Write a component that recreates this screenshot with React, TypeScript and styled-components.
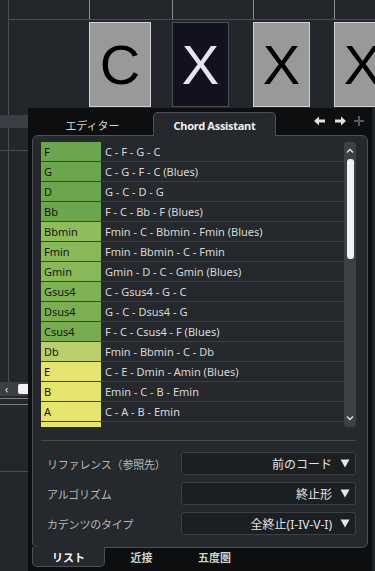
import styled, { createGlobalStyle } from 'styled-components'

const GlobalStyle = createGlobalStyle`
  html, body {
    margin: 0;
    padding: 0;
    background: #23272b;
  }
  body {
    font-family: 'Noto Sans', 'Noto Sans CJK JP', sans-serif;
  }
`

interface Chord {
    name: string
    color: string
    prog: string
}

const chords: Chord[] = [
    { name: 'F', color: '#6ba64f', prog: 'C - F - G - C' },
    { name: 'G', color: '#6ba64f', prog: 'C - G - F - C (Blues)' },
    { name: 'D', color: '#6ba64f', prog: 'G - C - D - G' },
    { name: 'Bb', color: '#6ba64f', prog: 'F - C - Bb - F (Blues)' },
    { name: 'Bbmin', color: '#8fbd5c', prog: 'Fmin - C - Bbmin - Fmin (Blues)' },
    { name: 'Fmin', color: '#89b858', prog: 'Fmin - Bbmin - C - Fmin' },
    { name: 'Gmin', color: '#89b858', prog: 'Gmin - D - C - Gmin (Blues)' },
    { name: 'Gsus4', color: '#7fb254', prog: 'C - Gsus4 - G - C' },
    { name: 'Dsus4', color: '#7caf52', prog: 'G - C - Dsus4 - G' },
    { name: 'Csus4', color: '#78ac50', prog: 'F - C - Csus4 - F (Blues)' },
    { name: 'Db', color: '#bacf69', prog: 'Fmin - Bbmin - C - Db' },
    { name: 'E', color: '#e5e46f', prog: 'C - E - Dmin - Amin (Blues)' },
    { name: 'B', color: '#e5e46f', prog: 'Emin - C - B - Emin' },
    { name: 'A', color: '#e5e46f', prog: 'C - A - B - Emin' },
    { name: '', color: '#e5e46f', prog: '' },
]

const settings = [
    { label: 'リファレンス（参照先）', value: '前のコード' },
    { label: 'アルゴリズム', value: '終止形' },
    { label: 'カデンツのタイプ', value: '全終止(I-IV-V-I)' },
]

const Root = styled.div`
  width: 375px;
  height: 571px;
  overflow: hidden;
  display: flex;
  flex-direction: column;
  background: #23272b;
`

/* ---------- track area on top ---------- */

const Track = styled.div`
  height: 108px;
  flex-shrink: 0;
  display: flex;
`

const Gutter = styled.div`
  width: 89px;
  flex-shrink: 0;
  display: flex;
  flex-direction: column;
`

const GutterRuler = styled.div`
  height: 19px;
  border-bottom: 1px solid #4a4e53;
  margin-left: 8px;
  border-left: 1px solid #4a4e53;
`

const GutterLine = styled.div`
  flex: 1;
  margin-left: 8px;
  border-left: 1px solid #4a4e53;
`

const Cell = styled.div<{ $w: number }>`
  width: ${({ $w }) => $w}px;
  flex-shrink: 0;
  display: flex;
  flex-direction: column;
`

const Ruler = styled.div`
  height: 19px;
  border-left: 1px solid #8a8d91;
  border-bottom: 1px solid #4a4e53;
  margin-bottom: 2px;
`

const ChordBox = styled.div<{ $w: number; $dark?: boolean }>`
  width: ${({ $w }) => $w}px;
  height: 85px;
  box-sizing: border-box;
  display: flex;
  align-items: center;
  justify-content: center;
  background: ${({ $dark }) => ($dark ? '#12121f' : '#999999')};
  border: 1px solid ${({ $dark }) => ($dark ? '#4c4c58' : '#d2d2d2')};
  color: ${({ $dark }) => ($dark ? '#e4e4f4' : '#000')};
  font-family: 'Liberation Sans', Arial, sans-serif;
  font-size: 56px;
  line-height: 1;
`

/* ---------- lower area ---------- */

const Lower = styled.div`
  flex: 1;
  display: flex;
  min-height: 0;
`

const LeftStrip = styled.div`
  width: 28px;
  flex-shrink: 0;
  display: flex;
  flex-direction: column;
`

const StripUpper = styled.div`
  height: 288px;
  display: flex;
  flex-direction: column;
  background: linear-gradient(#4a4e53, #4a4e53) 8px 0 / 1px 100% no-repeat;
`

const Band = styled.div`
  height: 13px;
  margin-top: 7px;
  background: #3a3f46;
`

const HLine = styled.div<{ $mt: number; $c?: string }>`
  height: 1px;
  margin-top: ${({ $mt }) => $mt}px;
  background: ${({ $c }) => $c || '#4a4e53'};
`

const HScroll = styled.div`
  height: 14px;
  display: flex;
  align-items: center;
  background: #3b3f44;
  color: #e8e8e8;
  font-size: 10px;
`

const HScrollThumb = styled.div`
  width: 10px;
  height: 10px;
  margin-left: auto;
  background: #f2f2f2;
  border-radius: 2px 0 0 2px;
`

const RightStrip = styled.div`
  width: 3px;
  flex-shrink: 0;
  background: #1f2225;
`

/* ---------- chord assistant panel ---------- */

const Panel = styled.div`
  width: 344px;
  flex-shrink: 0;
  display: flex;
  flex-direction: column;
  background: #0d0e0f;
`

const TabBar = styled.div`
  height: 27px;
  display: flex;
  align-items: flex-end;
  padding-left: 4px;
  position: relative;
  z-index: 1;
`

const Tab = styled.div<{ $active?: boolean; $w: number }>`
  width: ${({ $w }) => $w}px;
  box-sizing: border-box;
  height: ${({ $active }) => ($active ? '24px' : '23px')};
  margin-bottom: ${({ $active }) => ($active ? '-1px' : '0')};
  display: flex;
  align-items: center;
  justify-content: center;
  font-size: 11px;
  font-weight: ${({ $active }) => ($active ? 700 : 400)};
  letter-spacing: ${({ $active }) => ($active ? '-0.3px' : '0')};
  color: ${({ $active }) => ($active ? '#f0f0f0' : '#d8d8d8')};
  background: ${({ $active }) => ($active ? '#25282c' : 'transparent')};
  border: ${({ $active }) => ($active ? '1px solid #4c4f54' : '1px solid transparent')};
  border-bottom: none;
  border-radius: 5px 5px 0 0;
  padding-top: 2px;
`

const TabTools = styled.div`
  margin-left: auto;
  height: 27px;
  display: flex;
  align-items: center;
  gap: 8px;
  padding-right: 8px;
  padding-bottom: 2px;
  box-sizing: border-box;
`

const Inner = styled.div`
  margin: 0 4px;
  height: 413px;
  box-sizing: border-box;
  border: 1px solid #4c4f54;
  border-radius: 6px;
  background: #25282c;
  padding: 6px 11px 11px 8px;
  display: flex;
  flex-direction: column;
`

const ListArea = styled.div`
  height: 285px;
  display: flex;
`

const List = styled.div`
  flex: 1;
  overflow: hidden;
`

const Row = styled.div`
  height: 20px;
  box-sizing: border-box;
  display: flex;
  border-bottom: 1px solid #3d4045;
  font-size: 11px;
`

const NameCell = styled.div<{ $bg: string }>`
  width: 60px;
  flex-shrink: 0;
  padding-left: 3px;
  box-sizing: border-box;
  display: flex;
  align-items: center;
  background: ${({ $bg }) => $bg};
  color: #161616;
`

const ProgCell = styled.div`
  flex: 1;
  padding-left: 4px;
  display: flex;
  align-items: center;
  color: #d8d8d8;
  white-space: nowrap;
`

const VScroll = styled.div`
  width: 12px;
  flex-shrink: 0;
  background: #3d4146;
  border-radius: 3px;
  display: flex;
  flex-direction: column;
  align-items: center;
`

const VArrow = styled.div`
  height: 17px;
  display: flex;
  align-items: center;
  justify-content: center;
`

const VThumb = styled.div`
  width: 7px;
  height: 100px;
  margin-left: 1px;
  background: #f2f2f2;
  border-radius: 3px;
`

const VSpacer = styled.div`
  flex: 1;
`

const Separator = styled.div`
  height: 1px;
  margin-top: 13px;
  background: #45484d;
`

const Settings = styled.div`
  margin-top: 11px;
  display: flex;
  flex-direction: column;
  gap: 7px;
`

const SettingRow = styled.div`
  height: 23px;
  display: flex;
  align-items: center;
`

const Label = styled.div`
  width: 140px;
  min-width: 0;
  flex-shrink: 0;
  box-sizing: border-box;
  padding-left: 6px;
  font-size: 11px;
  color: #b9b9b9;
  white-space: nowrap;
  letter-spacing: -0.2px;
`

const Dropdown = styled.div`
  flex: 1;
  height: 23px;
  box-sizing: border-box;
  display: flex;
  align-items: center;
  justify-content: flex-end;
  gap: 8px;
  padding-right: 5px;
  background: #1c1f22;
  border: 1px solid #3c3f44;
  border-radius: 3px;
  font-size: 12px;
  color: #e2e2e2;
`

const BottomBar = styled.div`
  height: 23px;
  display: flex;
  align-items: flex-start;
  padding-left: 4px;
  position: relative;
  z-index: 1;
`

const BottomTab = styled.div<{ $active?: boolean }>`
  width: 73px;
  box-sizing: border-box;
  height: 20px;
  margin-top: -1px;
  display: flex;
  align-items: center;
  justify-content: center;
  font-size: 11px;
  font-weight: 700;
  color: ${({ $active }) => ($active ? '#f4f4f4' : '#d0d0d0')};
  background: ${({ $active }) => ($active ? '#25282c' : 'transparent')};
  border: 1px solid ${({ $active }) => ($active ? '#4c4f54' : 'transparent')};
  border-top: none;
  border-radius: 0 0 5px 5px;
`

const Tri = () => (
    <svg width="10" height="9" viewBox="0 0 10 9">
        <path d="M0.5 0.5 H9.5 L5 8.5 Z" fill="#e6e6e6" />
    </svg>
)

const ArrowLeft = () => (
    <svg width="12" height="10" viewBox="0 0 12 10">
        <path d="M0 5 L5 0.5 V3.5 H11 V6.5 H5 V9.5 Z" fill="#e0e0e0" />
    </svg>
)

const ArrowRight = () => (
    <svg width="12" height="10" viewBox="0 0 12 10">
        <path d="M12 5 L7 0.5 V3.5 H1 V6.5 H7 V9.5 Z" fill="#e0e0e0" />
    </svg>
)

const Plus = () => (
    <svg width="10" height="10" viewBox="0 0 10 10">
        <path d="M4 0 H6 V4 H10 V6 H6 V10 H4 V6 H0 V4 H4 Z" fill="#55585c" />
    </svg>
)

const ChevUp = () => (
    <svg width="8" height="5" viewBox="0 0 8 5">
        <path d="M1 4.5 L4 1.5 L7 4.5" stroke="#e6e6e6" strokeWidth="1.3" fill="none" />
    </svg>
)

const ChevDown = () => (
    <svg width="8" height="5" viewBox="0 0 8 5">
        <path d="M1 0.5 L4 3.5 L7 0.5" stroke="#e6e6e6" strokeWidth="1.3" fill="none" />
    </svg>
)

export default function App() {
    return (
        <Root>
            <GlobalStyle />
            <Track>
                <Gutter>
                    <GutterRuler />
                    <GutterLine />
                </Gutter>
                <Cell $w={83}>
                    <Ruler />
                    <ChordBox $w={62}>C</ChordBox>
                </Cell>
                <Cell $w={81}>
                    <Ruler />
                    <ChordBox $w={57} $dark>X</ChordBox>
                </Cell>
                <Cell $w={81}>
                    <Ruler />
                    <ChordBox $w={57}>X</ChordBox>
                </Cell>
                <Cell $w={60}>
                    <Ruler />
                    <ChordBox $w={57}>X</ChordBox>
                </Cell>
            </Track>

            <Lower>
                <LeftStrip>
                    <StripUpper>
                        <Band />
                        <HLine $mt={22} />
                        <VSpacer />
                        <HScroll>
                            <span style={{ marginLeft: 5 }}>&lsaquo;</span>
                            <HScrollThumb />
                        </HScroll>
                    </StripUpper>
                    <HLine $mt={2} $c="#7d8084" />
                    <HLine $mt={5} $c="#7d8084" />
                    <HLine $mt={66} />
                </LeftStrip>

                <Panel>
                    <TabBar>
                        <Tab $w={121}>エディター</Tab>
                        <Tab $w={123} $active>Chord Assistant</Tab>
                        <TabTools>
                            <ArrowLeft />
                            <ArrowRight />
                            <Plus />
                        </TabTools>
                    </TabBar>

                    <Inner>
                        <ListArea>
                            <List>
                                {chords.map((c, i) => (
                                    <Row key={i}>
                                        <NameCell $bg={c.color}>{c.name}</NameCell>
                                        <ProgCell>{c.prog}</ProgCell>
                                    </Row>
                                ))}
                            </List>
                            <VScroll>
                                <VArrow><ChevUp /></VArrow>
                                <VThumb />
                                <VSpacer />
                                <VArrow><ChevDown /></VArrow>
                            </VScroll>
                        </ListArea>

                        <Separator />

                        <Settings>
                            {settings.map((s) => (
                                <SettingRow key={s.label}>
                                    <Label>{s.label}</Label>
                                    <Dropdown>
                                        {s.value}
                                        <Tri />
                                    </Dropdown>
                                </SettingRow>
                            ))}
                        </Settings>
                    </Inner>

                    <BottomBar>
                        <BottomTab $active>リスト</BottomTab>
                        <BottomTab>近接</BottomTab>
                        <BottomTab>五度圏</BottomTab>
                    </BottomBar>
                </Panel>

                <RightStrip />
            </Lower>
        </Root>
    )
}
